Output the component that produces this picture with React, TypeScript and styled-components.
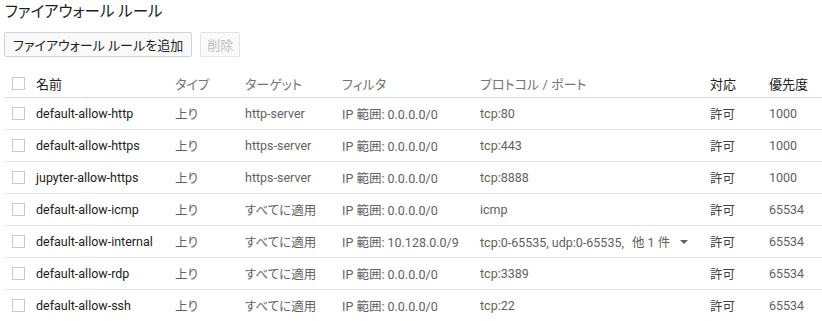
import React from 'react';
import styled, { createGlobalStyle } from 'styled-components';

const GlobalStyle = createGlobalStyle`
  body {
    margin: 0;
    background: #fff;
    font-family: Roboto, "Noto Sans CJK JP", sans-serif;
    font-feature-settings: "palt";
    color: #212121;
  }
`;

type Rule = {
  name: string;
  target: string;
  filter: string;
  protocol: string;
  more?: string;
  priority: string;
};

const rules: Rule[] = [
  { name: 'default-allow-http', target: 'http-server', filter: 'IP 範囲: 0.0.0.0/0', protocol: 'tcp:80', priority: '1000' },
  { name: 'default-allow-https', target: 'https-server', filter: 'IP 範囲: 0.0.0.0/0', protocol: 'tcp:443', priority: '1000' },
  { name: 'jupyter-allow-https', target: 'https-server', filter: 'IP 範囲: 0.0.0.0/0', protocol: 'tcp:8888', priority: '1000' },
  { name: 'default-allow-icmp', target: 'すべてに適用', filter: 'IP 範囲: 0.0.0.0/0', protocol: 'icmp', priority: '65534' },
  { name: 'default-allow-internal', target: 'すべてに適用', filter: 'IP 範囲: 10.128.0.0/9', protocol: 'tcp:0-65535, udp:0-65535,', more: '他 1 件', priority: '65534' },
  { name: 'default-allow-rdp', target: 'すべてに適用', filter: 'IP 範囲: 0.0.0.0/0', protocol: 'tcp:3389', priority: '65534' },
  { name: 'default-allow-ssh', target: 'すべてに適用', filter: 'IP 範囲: 0.0.0.0/0', protocol: 'tcp:22', priority: '65534' },
];

const Page = styled.div`
  padding: 2px 0 0 4px;
`;

const Title = styled.h1`
  margin: 0 0 0 1px;
  font-size: 15.5px;
  font-weight: 400;
  line-height: 20px;
  color: #212121;
`;

const Toolbar = styled.div`
  display: flex;
  gap: 8px;
  margin-top: 10px;
`;

const Button = styled.button<{ $disabled?: boolean }>`
  height: 25px;
  padding: 0 ${(p) => (p.$disabled ? 6 : 8)}px;
  border: 1px solid ${(p) => (p.$disabled ? '#e3e3e3' : '#d4d4d4')};
  border-radius: 2px;
  background: ${(p) => (p.$disabled ? '#fafafa' : '#f9f9f9')};
  color: ${(p) => (p.$disabled ? '#bdbdbd' : '#212121')};
  font-family: Roboto, "Noto Sans CJK JP", sans-serif;
  font-feature-settings: "palt";
  font-size: 13px;
  cursor: ${(p) => (p.$disabled ? 'default' : 'pointer')};
`;

const Table = styled.table`
  margin-top: 13px;
  width: 818px;
  border-collapse: collapse;
  table-layout: fixed;
  font-size: 12.5px;
`;

const HeadCell = styled.th<{ $dark?: boolean }>`
  height: 27px;
  padding: 0 0 0 8px;
  text-align: left;
  font-weight: 400;
  font-size: 13px;
  color: ${(p) => (p.$dark ? '#212121' : '#757575')};
  border-bottom: 1px solid #dcdcdc;
  white-space: nowrap;
`;

const Row = styled.tr`
  border-bottom: 1px solid #e6e6e6;
`;

const Cell = styled.td<{ $tone?: 'dark' | 'mid' }>`
  height: 31px;
  padding: 0 0 0 8px;
  color: ${(p) => (p.$tone === 'dark' ? '#212121' : p.$tone === 'mid' ? '#424242' : '#616161')};
  white-space: nowrap;
`;

const Check = styled.span`
  display: block;
  width: 11px;
  height: 11px;
  border: 1px solid #c8c8c8;
  background: #fff;
`;

const More = styled.span`
  display: inline-flex;
  align-items: center;
  margin-left: 8px;
  color: #616161;
`;

const Caret = styled.span`
  display: inline-block;
  margin-left: 10px;
  width: 0;
  height: 0;
  border-left: 4px solid transparent;
  border-right: 4px solid transparent;
  border-top: 4px solid #616161;
`;

const widths = [24, 139, 70, 97, 138, 230, 59, 61];

export default function App() {
  return (
    <Page>
      <GlobalStyle />
      <Title>ファイアウォール ルール</Title>
      <Toolbar>
        <Button>ファイアウォール ルールを追加</Button>
        <Button $disabled disabled>削除</Button>
      </Toolbar>
      <Table>
        <colgroup>
          {widths.map((w, i) => (
            <col key={i} style={{ width: w }} />
          ))}
        </colgroup>
        <thead>
          <tr>
            <HeadCell><Check /></HeadCell>
            <HeadCell $dark>名前</HeadCell>
            <HeadCell>タイプ</HeadCell>
            <HeadCell>ターゲット</HeadCell>
            <HeadCell>フィルタ</HeadCell>
            <HeadCell>プロトコル / ポート</HeadCell>
            <HeadCell $dark>対応</HeadCell>
            <HeadCell $dark>優先度</HeadCell>
          </tr>
        </thead>
        <tbody>
          {rules.map((r) => (
            <Row key={r.name}>
              <Cell><Check /></Cell>
              <Cell $tone="dark">{r.name}</Cell>
              <Cell>上り</Cell>
              <Cell>{r.target}</Cell>
              <Cell>{r.filter}</Cell>
              <Cell>
                {r.protocol}
                {r.more && (
                  <More>
                    {r.more}
                    <Caret />
                  </More>
                )}
              </Cell>
              <Cell $tone="mid">許可</Cell>
              <Cell>{r.priority}</Cell>
            </Row>
          ))}
        </tbody>
      </Table>
    </Page>
  );
}
